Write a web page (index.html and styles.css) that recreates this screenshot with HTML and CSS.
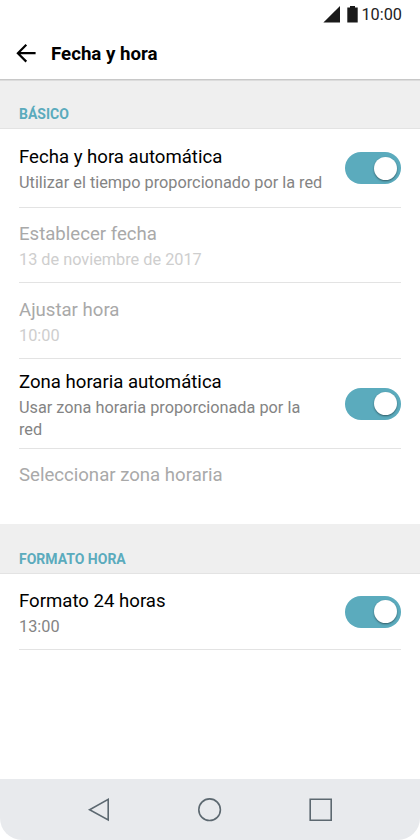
FILE: index.html
```html
<!DOCTYPE html>
<html lang="es">
<head>
    <meta charset="UTF-8">
    <meta name="viewport" content="width=device-width, initial-scale=1.0">
    <title>Fecha y hora</title>
    <link rel="stylesheet" href="styles.css">
</head>
<body>
    <div class="screen">
        <div class="status-bar">
            <svg class="icon-signal" width="17" height="17" viewBox="0 0 17 17" aria-hidden="true">
                <path d="M17 0v16.5H.4z"/>
            </svg>
            <svg class="icon-battery" width="11" height="17" viewBox="0 0 11 17" aria-hidden="true">
                <path d="M3 0h5v1.5h2.7v15H.3v-15H3z"/>
            </svg>
            <span class="clock">10:00</span>
        </div>

        <header class="app-bar">
            <a class="back" href="#" aria-label="Atrás">
                <svg width="20" height="20" viewBox="0 0 20 20" aria-hidden="true">
                    <path d="M19.6 9.2H2M10.3.8L1.9 9.2l8.4 8.4"/>
                </svg>
            </a>
            <h1>Fecha y hora</h1>
        </header>

        <main>
            <section>
                <h2>BÁSICO</h2>
                <ul class="settings">
                    <li class="row row-first">
                        <div class="row-text">
                            <div class="title">Fecha y hora automática</div>
                            <div class="summary">Utilizar el tiempo proporcionado por la red</div>
                        </div>
                        <div class="toggle" role="switch" aria-checked="true"></div>
                    </li>
                    <li class="row row-date disabled">
                        <div class="row-text">
                            <div class="title">Establecer fecha</div>
                            <div class="summary">13 de noviembre de 2017</div>
                        </div>
                    </li>
                    <li class="row disabled">
                        <div class="row-text">
                            <div class="title">Ajustar hora</div>
                            <div class="summary">10:00</div>
                        </div>
                    </li>
                    <li class="row row-tall">
                        <div class="row-text">
                            <div class="title">Zona horaria automática</div>
                            <div class="summary">Usar zona horaria proporcionada por la red</div>
                        </div>
                        <div class="toggle" role="switch" aria-checked="true"></div>
                    </li>
                    <li class="row row-last disabled">
                        <div class="row-text">
                            <div class="title">Seleccionar zona horaria</div>
                        </div>
                    </li>
                </ul>
            </section>

            <section>
                <h2>FORMATO HORA</h2>
                <ul class="settings">
                    <li class="row">
                        <div class="row-text">
                            <div class="title">Formato 24 horas</div>
                            <div class="summary">13:00</div>
                        </div>
                        <div class="toggle" role="switch" aria-checked="true"></div>
                    </li>
                </ul>
            </section>
        </main>

        <nav class="nav-bar">
            <svg width="24" height="24" viewBox="0 0 24 24" aria-hidden="true">
                <path d="M21.2 1.4v20.6L2.6 11.7z"/>
            </svg>
            <svg width="24" height="24" viewBox="0 0 24 24" aria-hidden="true">
                <circle cx="11.6" cy="11.7" r="10.8"/>
            </svg>
            <svg width="24" height="24" viewBox="0 0 24 24" aria-hidden="true">
                <path d="M1.2 1.2h21v21h-21z"/>
            </svg>
        </nav>
    </div>
</body>
</html>
```
FILE: styles.css
```css
:root {
    --accent: #5babbd;
    --section-bg: #efefef;
    --line: #e3e3e3;
    --nav-bg: #e8eaed;
    --nav-icon: #5c6870;
}

* {
    box-sizing: border-box;
}

body {
    margin: 0;
    background-color: #fff;
    font-family: Roboto, "Liberation Sans", sans-serif;
    color: #000;
}

.screen {
    display: flex;
    flex-direction: column;
    height: 840px;
}

h1, h2 {
    margin: 0;
}

.status-bar {
    display: flex;
    justify-content: flex-end;
    align-items: center;
    height: 29px;
    padding-right: 18px;
}

.status-bar svg {
    fill: #1a1a1a;
}

.icon-battery {
    margin: 0 3px 0 7px;
}

.clock {
    font-size: 16.3px;
    line-height: 29px;
    color: #222;
}

.app-bar {
    display: flex;
    align-items: center;
    height: 50px;
    padding-left: 16px;
}

.back {
    display: flex;
    margin-right: 15px;
}

.back svg {
    fill: none;
    stroke: #000;
    stroke-width: 2.2;
}

h1 {
    font-size: 18.7px;
    font-weight: 700;
}

main {
    flex: 1;
}

h2 {
    height: 50px;
    padding: 26px 19px 0;
    border-bottom: 1px solid var(--line);
    background-color: var(--section-bg);
    font-size: 14px;
    font-weight: 700;
    line-height: 19px;
    color: var(--accent);
}

section:first-child h2 {
    background-image: linear-gradient(#c8c8c8 1px, #dcdcdc 1px, #dcdcdc 2px, transparent 2px);
}

.settings {
    margin: 0;
    padding: 0 19px;
    list-style: none;
}

.row {
    display: flex;
    align-items: center;
    justify-content: space-between;
    height: 76px;
    border-bottom: 1px solid var(--line);
}

.row-first {
    height: 79px;
}

.row-date {
    height: 75px;
}

.row-tall {
    height: 90px;
}

.row-last {
    align-items: flex-start;
    height: 75px;
    padding-top: 13px;
    border-bottom: none;
}

.row-text {
    max-width: 306px;
    padding-top: 2px;
}

.row-date .row-text {
    padding-top: 1px;
}

.row-last .row-text {
    padding-top: 0;
}

.title {
    font-size: 18.6px;
    line-height: 26px;
}

.summary {
    margin-top: 2px;
    font-size: 16.3px;
    line-height: 22px;
    color: #848484;
}

.disabled .title {
    color: #a9a9a9;
}

.disabled .summary {
    color: #cecece;
}

.toggle {
    display: flex;
    flex-shrink: 0;
    align-items: center;
    justify-content: flex-end;
    width: 56px;
    height: 32px;
    padding-right: 4px;
    border-radius: 16px;
    background-color: var(--accent);
}

.toggle::after {
    content: "";
    width: 23px;
    height: 23px;
    border-radius: 50%;
    background-color: #fff;
    box-shadow: 0 1px 2px rgba(0, 0, 0, 0.45);
}

.nav-bar {
    display: flex;
    align-items: center;
    justify-content: center;
    gap: 87px;
    height: 61px;
    border-radius: 0 0 22px 22px;
    background-color: var(--nav-bg);
}

.nav-bar svg {
    fill: none;
    stroke: var(--nav-icon);
    stroke-width: 1.6;
}
```
